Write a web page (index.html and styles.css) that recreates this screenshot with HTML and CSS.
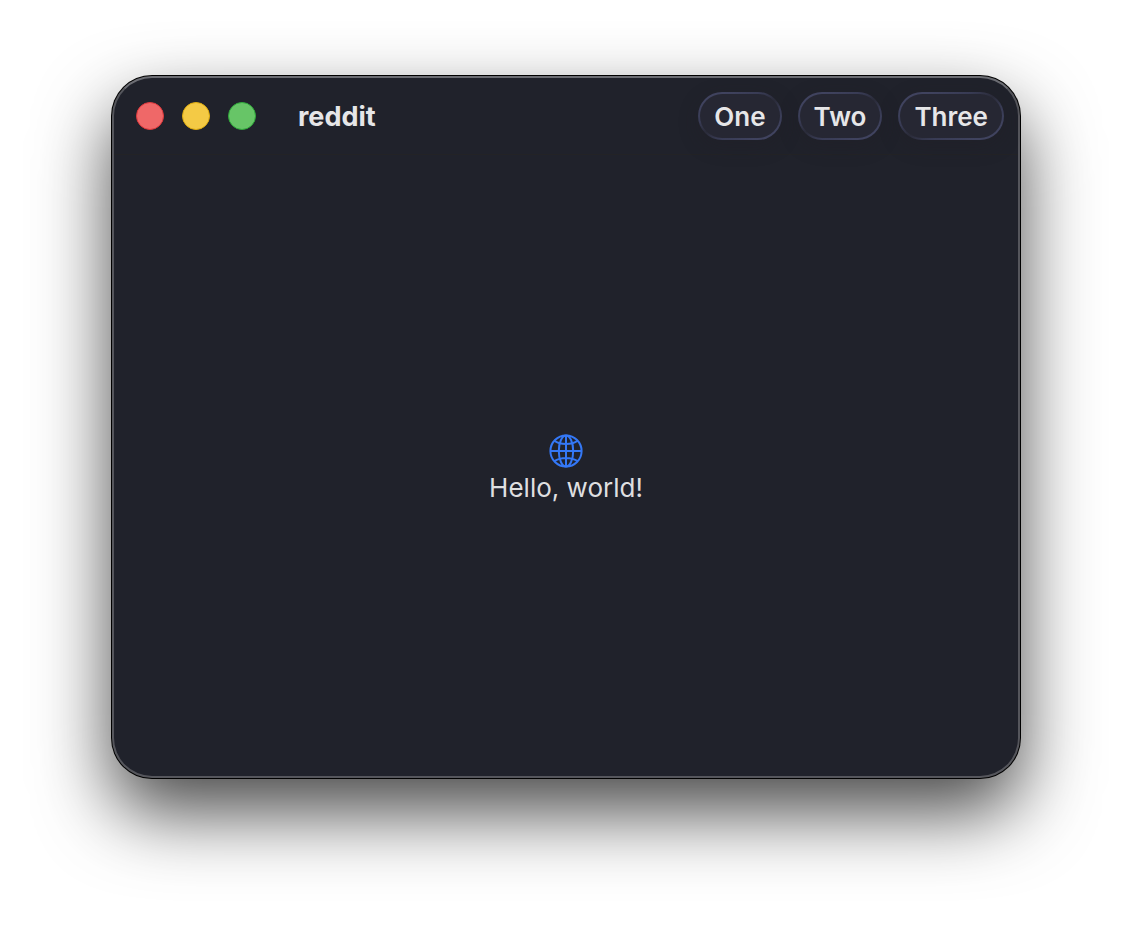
FILE: index.html
```html
<!DOCTYPE html>
<html lang="en">
<head>
<meta charset="utf-8">
<meta name="viewport" content="width=device-width, initial-scale=1">
<title>reddit</title>
<link rel="stylesheet" href="styles.css">
</head>
<body class="desktop">
<div class="window">
  <header class="toolbar">
    <div class="lights">
      <button class="light light-close" type="button" aria-label="Close"></button>
      <button class="light light-minimize" type="button" aria-label="Minimize"></button>
      <button class="light light-zoom" type="button" aria-label="Zoom"></button>
    </div>
    <h1 class="title">reddit</h1>
    <nav class="actions">
      <button class="action" type="button">One</button>
      <button class="action" type="button">Two</button>
      <button class="action" type="button">Three</button>
    </nav>
  </header>
  <main class="content">
    <svg class="globe" viewBox="0 0 34 34" aria-hidden="true">
      <circle cx="17" cy="17" r="15.6"/>
      <ellipse cx="17" cy="17" rx="7.2" ry="15.6"/>
      <path d="M17 1.4v31.2M1.4 17h31.2M5.2 6.6Q10 10 17 10T28.8 6.6M5.2 27.4Q10 24 17 24T28.8 27.4"/>
    </svg>
    <p class="greeting">Hello, world!</p>
  </main>
</div>
</body>
</html>
```
FILE: styles.css
```css
* {
  box-sizing: border-box;
}

.desktop {
  display: flex;
  min-height: 100vh;
  margin: 0;
  padding: 76px 112px 148px;
  background: #fff;
  font-family: Inter, "Liberation Sans", sans-serif;
  font-size: 26px;
  line-height: 32px;
  color: #dfdfe0;
}

.window {
  display: flex;
  flex: 1;
  flex-direction: column;
  border: 2px solid #55565c;
  border-top-color: #6c6d73;
  border-radius: 40px;
  background: #20222b;
  box-shadow:
    0 0 0 1px #000,
    0 34px 74px rgba(0, 0, 0, 0.72);
}

.toolbar {
  display: flex;
  align-items: center;
  height: 77px;
  padding: 0 14px 0 22px;
  border-bottom: 1px solid #232326;
}

.lights {
  display: flex;
  gap: 18px;
}

.light {
  width: 28px;
  height: 28px;
  padding: 0;
  border: 1px solid;
  border-radius: 50%;
}

.light-close {
  border-color: #e0383c;
  background: #ef6868;
}

.light-minimize {
  border-color: #dfac10;
  background: #f4ca45;
}

.light-zoom {
  border-color: #2fa93a;
  background: #67c567;
}

.title {
  margin: 0 0 0 42px;
  padding-top: 2px;
  font-size: 27px;
  font-weight: 700;
  line-height: 32px;
  color: #e6e6e8;
}

.actions {
  display: flex;
  gap: 16px;
  margin-left: auto;
}

.action {
  height: 48px;
  padding: 2px 14px 0;
  border: 2px solid transparent;
  border-radius: 24px;
  background:
    linear-gradient(#262733, #262733) padding-box,
    linear-gradient(155deg, #40435f 15%, #383b54 35%, #2a2b39 50%, #383b54 65%, #40435f 85%) border-box;
  box-shadow: 0 6px 20px rgba(32, 30, 38, 0.3);
  font: inherit;
  font-weight: 600;
  color: #e6e6e8;
}

.content {
  display: flex;
  flex: 1;
  flex-direction: column;
  align-items: center;
  justify-content: center;
  gap: 4px;
  padding-top: 6px;
}

.globe {
  width: 34px;
  height: 34px;
  fill: none;
  stroke: #3478f6;
  stroke-width: 2;
}

.greeting {
  margin: 0;
}
```
